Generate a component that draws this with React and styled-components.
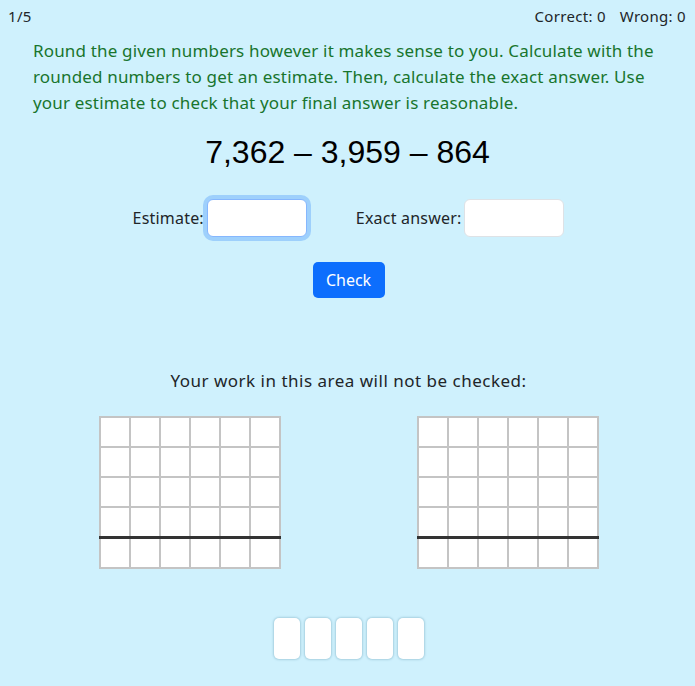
import React from 'react'
import styled, { createGlobalStyle } from 'styled-components'

const Global = createGlobalStyle`
  html, body { margin: 0; padding: 0; }
  body {
    background: #cff1fd;
    font-family: 'Noto Sans', 'Open Sans', sans-serif;
    color: #212529;
  }
`

const Page = styled.div`
  width: 695px;
  height: 686px;
  background: #cff1fd;
  display: flex;
  flex-direction: column;
  box-sizing: border-box;
`

const TopBar = styled.div`
  display: flex;
  justify-content: space-between;
  align-items: center;
  height: 32px;
  padding: 0 9px 0 8px;
  font-size: 15px;
  letter-spacing: 0.3px;
`

const Score = styled.div`
  display: flex;
  gap: 14px;
`

const Instructions = styled.p`
  margin: 6px 0 0 33px;
  width: 640px;
  font-size: 17px;
  letter-spacing: 0.17px;
  line-height: 26px;
  color: #18752d;
`

const Expression = styled.div`
  margin-top: 16px;
  text-align: center;
  font-family: 'Liberation Sans', Arial, sans-serif;
  font-size: 32px;
  line-height: 40px;
  color: #000;
`

const AnswerRow = styled.div`
  margin-top: 27px;
  display: flex;
  justify-content: center;
  align-items: center;
  gap: 49px;
  padding-left: 2px;
`

const Field = styled.label`
  display: flex;
  align-items: center;
  gap: 3px;
  font-size: 16px;
  letter-spacing: 0.2px;
`

const Input = styled.input`
  width: 100px;
  height: 38px;
  box-sizing: border-box;
  border: 1px solid ${p => (p.$focused ? '#86b7fe' : '#dee2e6')};
  border-radius: 6px;
  background: #fff;
  box-shadow: ${p => (p.$focused ? '0 0 0 4px rgba(13,110,253,0.25)' : 'none')};
  outline: none;
  font-size: 16px;
  padding: 0 8px;
`

const CheckButton = styled.button`
  align-self: center;
  margin-top: 25px;
  width: 72px;
  height: 36px;
  border: none;
  border-radius: 5px;
  background: #0d6efd;
  color: #fff;
  font-family: 'Noto Sans', sans-serif;
  font-size: 16px;
  margin-left: 2px;
`

const WorkNote = styled.div`
  margin-top: 72px;
  text-align: center;
  font-size: 17px;
  letter-spacing: 0.5px;
  line-height: 22px;
  padding-left: 2px;
`

const Grids = styled.div`
  margin-top: 24px;
  display: flex;
  justify-content: center;
  gap: 136px;
  padding-left: 3px;
`

const Grid = styled.table`
  border-collapse: collapse;
  background: #fff;
`

const Cell = styled.td`
  width: 28px;
  height: 28px;
  padding: 0;
  border: 2px solid #c4c4c4;
  border-bottom: ${p => (p.$line ? '3px solid #333' : '2px solid #c4c4c4')};
`

const Tiles = styled.div`
  margin-top: 49px;
  display: flex;
  justify-content: center;
  gap: 5px;
  padding-left: 3px;
`

const Tile = styled.div`
  width: 26px;
  height: 41px;
  background: #fff;
  border-radius: 5px;
  box-shadow: 0 0 2px 1px rgba(120, 170, 190, 0.45);
`

function WorkGrid() {
  return (
    <Grid>
      <tbody>
        {[0, 1, 2, 3, 4].map(r => (
          <tr key={r}>
            {[0, 1, 2, 3, 4, 5].map(c => (
              <Cell key={c} $line={r === 3} />
            ))}
          </tr>
        ))}
      </tbody>
    </Grid>
  )
}

export default function App() {
  return (
    <Page>
      <Global />
      <TopBar>
        <span>1/5</span>
        <Score>
          <span>Correct: 0</span>
          <span>Wrong: 0</span>
        </Score>
      </TopBar>
      <Instructions>
        Round the given numbers however it makes sense to you. Calculate with the rounded numbers to get an estimate. Then, calculate the exact answer. Use your estimate to check that your final answer is reasonable.
      </Instructions>
      <Expression>7,362 – 3,959 – 864</Expression>
      <AnswerRow>
        <Field>
          Estimate:
          <Input $focused />
        </Field>
        <Field>
          Exact answer:
          <Input />
        </Field>
      </AnswerRow>
      <CheckButton>Check</CheckButton>
      <WorkNote>Your work in this area will not be checked:</WorkNote>
      <Grids>
        <WorkGrid />
        <WorkGrid />
      </Grids>
      <Tiles>
        {[0, 1, 2, 3, 4].map(i => (
          <Tile key={i} />
        ))}
      </Tiles>
    </Page>
  )
}
